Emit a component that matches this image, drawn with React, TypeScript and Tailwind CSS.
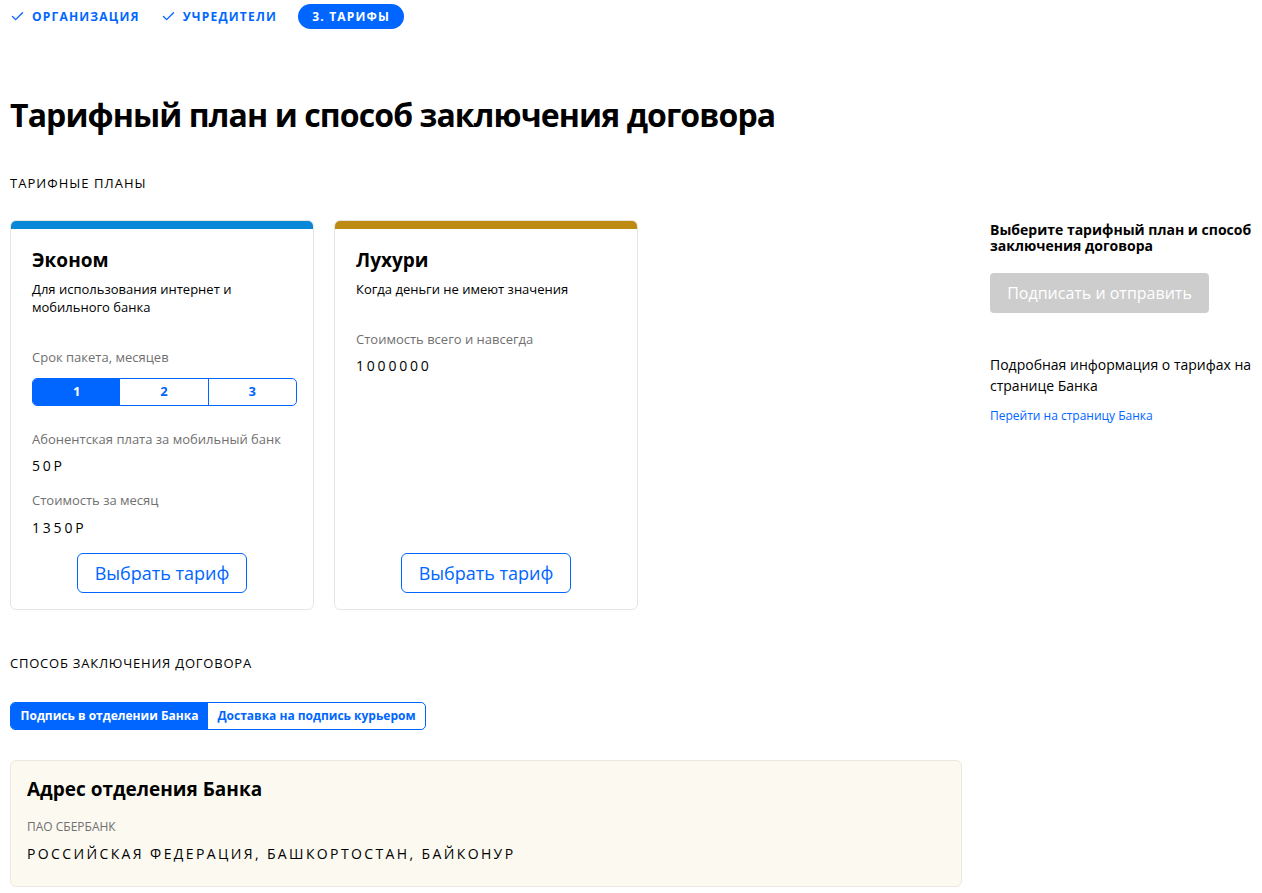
import { Check } from "lucide-react";

const font = { fontFamily: '"Open Sans", "Noto Sans", sans-serif' };

function Stepper() {
  return (
    <div className="flex items-center h-[33px] gap-[21px] text-[12px] font-bold tracking-[0.1em] text-[#0066ff]">
      <div className="flex items-center gap-[7px]">
        <Check size={15} strokeWidth={2.2} />
        <span>ОРГАНИЗАЦИЯ</span>
      </div>
      <div className="flex items-center gap-[7px]">
        <Check size={15} strokeWidth={2.2} />
        <span>УЧРЕДИТЕЛИ</span>
      </div>
      <div className="flex items-center h-[25px] px-[14px] rounded-full bg-[#0066ff] text-white">3. ТАРИФЫ</div>
    </div>
  );
}

function PlanCard({ color, title, children }: { color: string; title: string; children: React.ReactNode }) {
  return (
    <div className="w-[304px] h-[390px] rounded-[6px] border border-[#e6e6e0] flex flex-col overflow-hidden">
      <div className={`h-[8px] ${color}`} />
      <div className="flex-1 flex flex-col pl-[21px] pr-[16px] pt-[17px] pb-[16px]">
        <div className="text-[19px] font-bold leading-[28px] text-black">{title}</div>
        {children}
      </div>
    </div>
  );
}

function SelectButton() {
  return (
    <div className="mt-auto flex justify-center pr-[5px]">
      <button className="w-[170px] h-[40px] rounded-[6px] border border-[#0066ff] text-[#0066ff] text-[18px]">
        Выбрать тариф
      </button>
    </div>
  );
}

export default function App() {
  return (
    <div className="min-h-screen bg-white text-black" style={font}>
      <div className="flex pl-[10px]">
        <div className="w-[952px] shrink-0">
          <Stepper />
          <h1 className="mt-[58px] text-[32px] font-bold leading-[48px] tracking-[-0.9px]">
            Тарифный план и способ заключения договора
          </h1>
          <div className="mt-[35px] text-[13px] leading-[18px] uppercase tracking-[0.08em]">Тарифные планы</div>

          <div className="mt-[28px] flex gap-[20px]">
            <PlanCard color="bg-[#0a88d8]" title="Эконом">
              <p className="mt-[6px] text-[13px] leading-[18px] w-[220px]">Для использования интернет и мобильного банка</p>
              <div className="mt-[32px] text-[13px] leading-[18px] text-[#707070]">Срок пакета, месяцев</div>
              <div className="mt-[12px] flex h-[28px] rounded-[5px] border border-[#0066ff] overflow-hidden text-[13px] font-bold">
                <div className="flex-1 flex items-center justify-center bg-[#0066ff] text-white">1</div>
                <div className="flex-1 flex items-center justify-center text-[#0066ff] border-r border-[#0066ff]">2</div>
                <div className="flex-1 flex items-center justify-center text-[#0066ff]">3</div>
              </div>
              <div className="mt-[24px] text-[13px] leading-[18px] text-[#707070]">Абонентская плата за мобильный банк</div>
              <div className="mt-[8px] text-[14px] leading-[20px] tracking-[0.2em]">50Р</div>
              <div className="mt-[15px] text-[13px] leading-[18px] text-[#707070]">Стоимость за месяц</div>
              <div className="mt-[9px] text-[14px] leading-[20px] tracking-[0.2em]">1350Р</div>
              <SelectButton />
            </PlanCard>
            <PlanCard color="bg-[#bd8a12]" title="Лухури">
              <p className="mt-[6px] text-[13px] leading-[18px]">Когда деньги не имеют значения</p>
              <div className="mt-[32px] text-[13px] leading-[18px] text-[#707070]">Стоимость всего и навсегда</div>
              <div className="mt-[8px] text-[14px] leading-[20px] tracking-[0.2em]">1000000</div>
              <SelectButton />
            </PlanCard>
          </div>

          <div className="mt-[44px] text-[13px] leading-[18px] uppercase tracking-[0.06em]">Способ заключения договора</div>
          <div className="mt-[30px] flex w-[416px] h-[28px] rounded-[5px] border border-[#0066ff] overflow-hidden text-[12px] font-bold">
            <div className="w-[197px] flex items-center justify-center bg-[#0066ff] text-white">Подпись в отделении Банка</div>
            <div className="flex-1 flex items-center justify-center text-[#0066ff]">Доставка на подпись курьером</div>
          </div>

          <div className="mt-[30px] rounded-[6px] border border-[#ebe8dc] bg-[#fcfaf0] px-[16px] pt-[14px] pb-[22px]">
            <div className="text-[19px] font-bold leading-[28px]">Адрес отделения Банка</div>
            <div className="mt-[16px] text-[12px] leading-[16px] text-[#707070] uppercase">ПАО Сбербанк</div>
            <div className="mt-[9px] text-[14px] leading-[20px] tracking-[0.17em] uppercase">
              Российская Федерация, Башкортостан, Байконур
            </div>
          </div>
        </div>

        <div className="ml-[28px] w-[262px] pt-[222px]">
          <div className="text-[14px] font-bold leading-[16px]">Выберите тарифный план и способ заключения договора</div>
          <button className="mt-[19px] w-[219px] h-[40px] rounded-[4px] bg-[#cdcdcd] text-white text-[16px]">
            Подписать и отправить
          </button>
          <p className="mt-[41px] text-[14px] leading-[21px]">Подробная информация о тарифах на странице Банка</p>
          <a className="mt-[12px] block text-[12px] leading-[16px] text-[#0066ff]">Перейти на страницу Банка</a>
        </div>
      </div>
    </div>
  );
}
